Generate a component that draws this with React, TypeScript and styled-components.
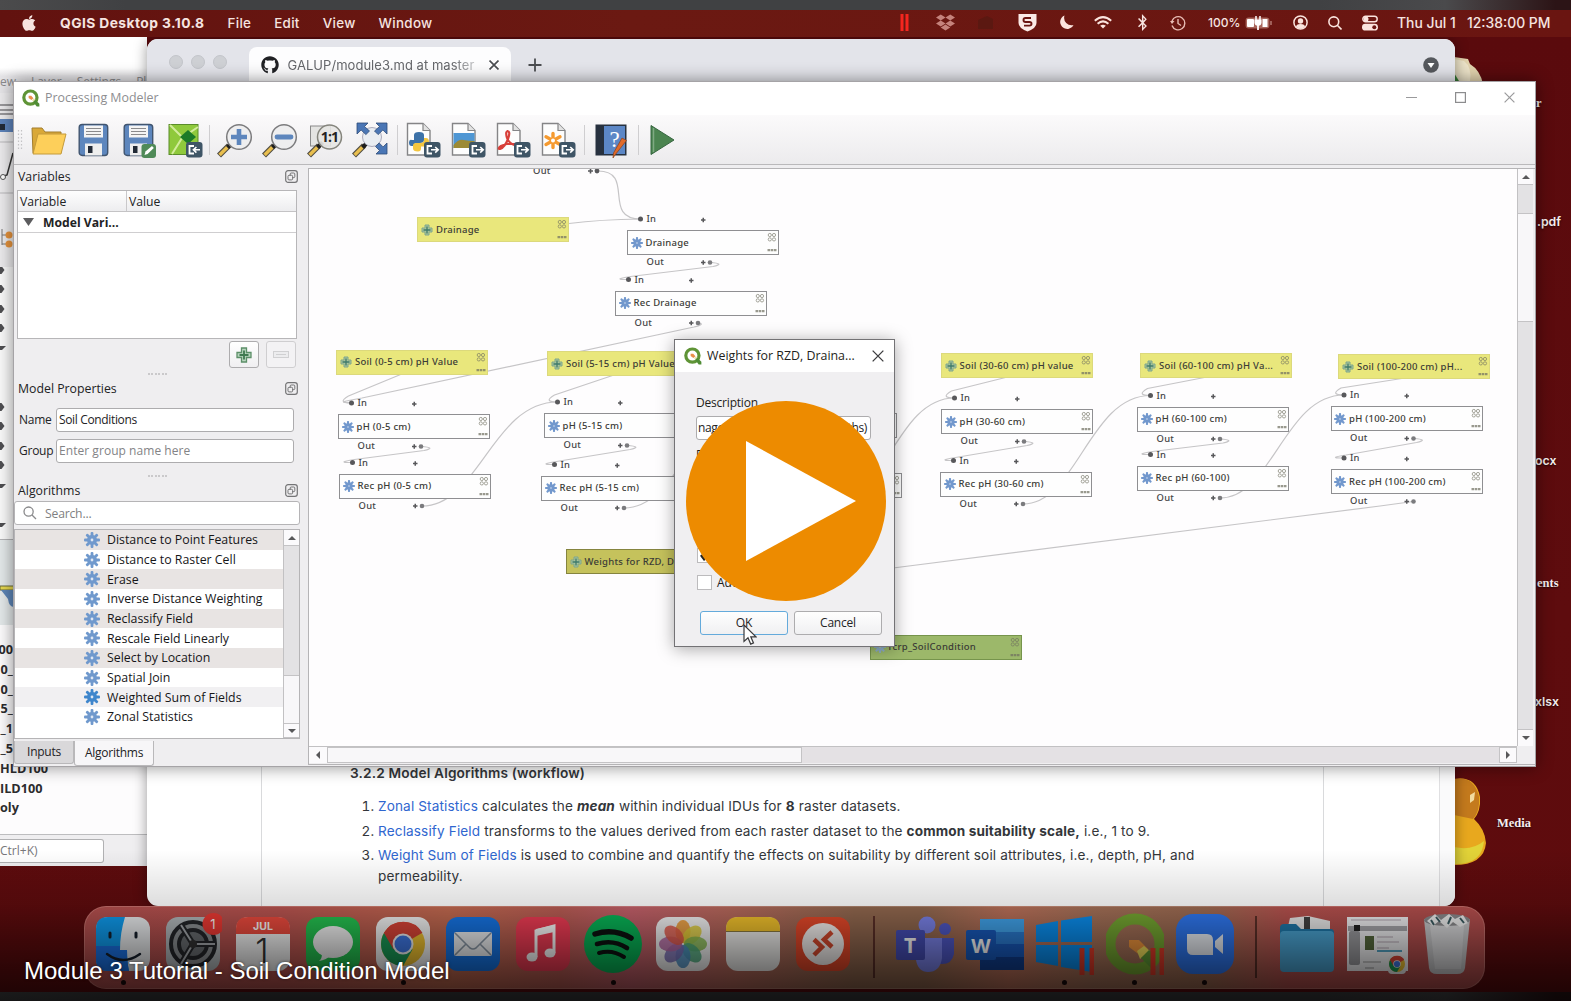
import React from 'react';
import styled, { createGlobalStyle, css } from 'styled-components';
import { FaApple, FaBluetoothB, FaDropbox, FaGithub } from 'react-icons/fa';

const ui = '"Open Sans", "Noto Sans", sans-serif';
const mac = 'Inter, Roboto, sans-serif';
const nodeFont = '"Noto Sans", "DejaVu Sans", sans-serif';

const Global = createGlobalStyle`
  * { box-sizing: border-box; }
  body { margin: 0; background: #404143; overflow: hidden; }
  svg { display: block; flex: none; }
`;

/* ---------- frame ---------- */

const Stage = styled.main`
  position: relative;
  display: flex;
  flex-direction: column;
  width: 1571px;
  height: 1001px;
  overflow: hidden;
  font-family: ${ui};
`;
const Strip = styled.div<{ $h: number }>`
  flex: none;
  height: ${p => p.$h}px;
  background: linear-gradient(90deg, #4b4b4c 0, #404143 8%, #404143 84%, #4a4a4c 92%, #2c1416 99%);
`;
const Desktop = styled.div`
  position: relative;
  flex: 1;
  overflow: hidden;
  background: linear-gradient(180deg, #5a0a0d 0, #5e0c0e 60%, #5e0b0d 100%);
`;

/* ---------- menu bar ---------- */

const MenuBar = styled.header`
  flex: none;
  display: flex;
  align-items: center;
  height: 27px;
  padding: 0 19px 2px 20px;
  background: linear-gradient(90deg, #62120f, #6b1912 40%, #6a1511);
  color: #f6e4e0;
  font: 500 13.4px/24px ${mac};
`;
const Menus = styled.nav`
  display: flex;
  flex: 1;
  padding-left: 22px;
  gap: 23px;
  letter-spacing: 0.3px;
`;
const AppName = styled.strong`
  font-weight: 700;
  font-size: 13.8px;
  letter-spacing: 0.42px;
`;
const Status = styled.div`
  display: flex;
  align-items: center;
`;
const Slot = styled.span<{ $w: number; $gap?: number; $size?: number }>`
  display: flex;
  flex: none;
  width: ${p => p.$w}px;
  margin-left: ${p => p.$gap ?? 0}px;
  font-size: ${p => p.$size ?? 13.9}px;
  white-space: nowrap;
`;

/* ---------- windows ---------- */

const Window = styled.section<{ $x: number; $y: number; $w: number; $h: number }>`
  position: absolute;
  left: ${p => p.$x}px;
  top: ${p => p.$y}px;
  width: ${p => p.$w}px;
  height: ${p => p.$h}px;
  display: flex;
  flex-direction: column;
  overflow: hidden;
`;
const BackWindow = styled(Window)`
  background: #fdfcfd;
  font-size: 12px;
  color: #2c2c2e;
`;
const BackMenu = styled.div`
  display: flex;
  gap: 15px;
  height: 56px;
  flex: none;
  padding: 36px 0 0;
  font-size: 12px;
  line-height: 18px;
  color: #8b8b8d;
  background: linear-gradient(180deg, #fff 0, #fff 55%, #e6e5e8 70%);
`;
const BackStrip = styled.div`
  flex: 1;
  width: 14px;
  display: flex;
  flex-direction: column;
`;
const BackTools = styled.div`
  height: 174px;
  flex: none;
  background: #ecebed;
`;
const BackTree = styled.div`
  height: 272px;
  flex: none;
  background: #fafafa;
`;
const BackFilter = styled.div`
  height: 86px;
  flex: none;
  padding-top: 43px;
  background: #e4e9ea;
  border-top: 1px solid #b4b4b6;
`;
const BackLayers = styled.div`
  flex: none;
  width: 146px;
  height: 209px;
  padding-top: 14px;
`;
const LayerLine = styled.div<{ $wide?: boolean }>`
  width: ${p => (p.$wide ? 130 : 13)}px;
  height: 19.8px;
  display: flex;
  justify-content: ${p => (p.$wide ? 'flex-start' : 'flex-end')};
  overflow: hidden;
  font-weight: 700;
  font-size: 12.7px;
  line-height: 20px;
  white-space: nowrap;
`;
const BackFooter = styled.div`
  flex: none;
  height: 32px;
  padding-top: 4px;
  background: #efeef0;
  border-top: 1px solid #bdbdbf;
`;
const BackInput = styled.div`
  width: 104px;
  height: 24px;
  border: 1px solid #b1b1b3;
  border-left: 0;
  border-radius: 0 3px 3px 0;
  background: #fff;
  color: #77777a;
  line-height: 22px;
  font-size: 12px;
`;

const Browser = styled(Window)`
  border-radius: 11px;
  background: #fff;
  box-shadow: 0 0 14px rgba(0, 0, 0, 0.4);
  font-family: ${mac};
`;
const TabStrip = styled.div`
  flex: none;
  display: flex;
  align-items: flex-end;
  height: 46px;
  padding-left: 22px;
  background: #e3e4ea;
`;
const Lights = styled.div`
  display: flex;
  gap: 8px;
  width: 79.5px;
  padding-bottom: 16px;
  i {
    width: 14px;
    height: 14px;
    border-radius: 50%;
    background: #ced0d4;
    border: 1px solid #c3c5ca;
  }
`;
const Tab = styled.div`
  display: flex;
  align-items: center;
  width: 262px;
  height: 38px;
  padding: 0 13px 3px 12px;
  border-radius: 8px 8px 0 0;
  background: #fdfdfe;
  color: #66686c;
  font-size: 13px;
`;
const TabTitle = styled.span`
  flex: none;
  width: 187px;
  margin: 0 14px 0 9px;
  overflow: hidden;
  white-space: nowrap;
  letter-spacing: 0.04px;
  -webkit-mask-image: linear-gradient(90deg, #000 88%, rgba(0, 0, 0, 0.35));
`;
const TabTail = styled.div`
  flex: 1;
  display: flex;
  align-items: center;
  justify-content: space-between;
  height: 38px;
  padding: 0 16px 3px 17px;
`;
const Page = styled.div`
  flex: 1;
  display: flex;
  padding-left: 114px;
  padding-top: 669px;
`;
const Article = styled.article`
  width: 1063px;
  padding: 9px 90px 0 88px;
  border-left: 1px solid #d9dadc;
  border-right: 1px solid #d9dadc;
  color: #33363a;
  font-size: 13.6px;
  letter-spacing: 0.13px;
  line-height: 20px;
  white-space: nowrap;
`;
const ArticleHead = styled.h4`
  margin: 0 0 13px;
  font-size: 13.7px;
  letter-spacing: 0.15px;
  line-height: 20px;
  font-weight: 600;
`;
const Steps = styled.ol`
  margin: 0;
  padding-left: 28px;
  li { margin-bottom: 4.6px; padding-left: 0; }
  li:last-child { line-height: 21px; }
`;
const Link = styled.a`
  color: #2f66cf;
`;
const PageScroll = styled.div`
  margin-left: auto;
  width: 16px;
  border-left: 1px solid #e0e0e2;
  background: #fafafb;
`;

const Modeler = styled(Window)`
  background: #efeef0;
  border: 1px solid #a5a3a6;
  box-shadow: 0 0 16px rgba(0, 0, 0, 0.45);
  color: #222224;
`;
const TitleBar = styled.div`
  flex: none;
  display: flex;
  align-items: center;
  height: 33px;
  padding: 0 20px 2px 8px;
  background: #fff;
  color: #8e8e91;
  font-size: 12.4px;
`;
const TitleText = styled.span`
  flex: 1;
  margin-left: 5px;
`;
const Controls = styled.div`
  display: flex;
  gap: 38px;
`;
const Toolbar = styled.div`
  flex: none;
  display: flex;
  align-items: center;
  height: 50px;
  padding-left: 3px;
  background: linear-gradient(180deg, #fbfafb, #ecebed);
  border-bottom: 1px solid #bab9bb;
`;
const Tool = styled.span<{ $gap?: number }>`
  display: flex;
  width: 36px;
  margin-right: 9px;
  margin-left: ${p => p.$gap ?? 0}px;
`;
const Rule = styled.i<{ $before: number; $after: number }>`
  width: 1px;
  height: 30px;
  margin: 0 ${p => p.$after}px 0 ${p => p.$before}px;
  background: #cfced0;
`;
const Body = styled.div`
  flex: 1;
  display: flex;
  min-height: 0;
`;

/* ---------- side panels ---------- */

const Side = styled.aside`
  flex: none;
  width: 294px;
  display: flex;
  flex-direction: column;
  font-size: 12.2px;
`;
const PanelHead = styled.div<{ $top: number }>`
  flex: none;
  display: flex;
  align-items: center;
  justify-content: space-between;
  height: 18px;
  margin-top: ${p => p.$top}px;
  padding: 0 10px 0 4px;
  font-size: 12.3px;
`;
const VarTable = styled.div`
  flex: none;
  width: 280px;
  height: 149px;
  margin: 5px 0 0 3px;
  border: 1px solid #b7b6b8;
  background: #fff;
`;
const VarHead = styled.div`
  display: flex;
  height: 21px;
  line-height: 22px;
  background: linear-gradient(180deg, #fefefe, #ededef);
  border-bottom: 1px solid #c4c3c5;
  span { padding-left: 2px; }
  span:first-child { width: 109px; border-right: 1px solid #c9c8ca; }
`;
const VarRow = styled.div`
  display: flex;
  align-items: center;
  gap: 9px;
  height: 21px;
  padding-left: 5px;
  font-weight: 700;
  border-bottom: 1px solid #cfced0;
`;
const VarButtons = styled.div`
  display: flex;
  gap: 7px;
  margin: 2px 0 0 215px;
`;
const IconButton = styled.div<{ $off?: boolean }>`
  display: flex;
  align-items: center;
  justify-content: center;
  width: 30px;
  height: 27px;
  border: 1px solid ${p => (p.$off ? '#cfced0' : '#adacae')};
  border-radius: 3px;
  background: ${p => (p.$off ? '#f3f2f4' : 'linear-gradient(180deg,#fff,#f0eff1)')};
`;
const Grip = styled.div<{ $top: number }>`
  flex: none;
  width: 19px;
  height: 2px;
  margin: ${p => p.$top}px 0 0 134px;
  background: repeating-linear-gradient(90deg, #cac9cb 0 2px, transparent 2px 3.4px);
`;
const Field = styled.label<{ $top: number }>`
  flex: none;
  display: flex;
  align-items: center;
  height: 25px;
  margin-top: ${p => p.$top}px;
  padding-left: 5px;
  font-size: 12px;
  letter-spacing: -0.25px;
`;
const FieldName = styled.span`
  width: 37px;
`;
const Input = styled.span<{ $hint?: boolean; $w: number }>`
  width: ${p => p.$w}px;
  height: 24px;
  padding-left: 2px;
  border: 1px solid #adacae;
  border-radius: 3px;
  background: #fff;
  line-height: 22px;
  white-space: nowrap;
  overflow: hidden;
  color: ${p => (p.$hint ? '#838386' : '#222224')};
  letter-spacing: ${p => (p.$hint ? 0.05 : -0.35)}px;
`;
const Search = styled.div`
  flex: none;
  display: flex;
  align-items: center;
  gap: 8px;
  width: 286px;
  height: 24px;
  margin-top: 2px;
  padding-left: 8px;
  border: 1px solid #b5b4b6;
  border-radius: 3px;
  background: #fff;
  color: #7f7f82;
  letter-spacing: -0.2px;
`;
const AlgoBox = styled.div`
  flex: none;
  display: flex;
  width: 286px;
  height: 210px;
  margin-top: 4px;
  border: 1px solid #b5b4b6;
  background: #fff;
`;
const AlgoList = styled.div`
  flex: 1;
`;
const Algo = styled.div<{ $bg: string }>`
  display: flex;
  align-items: center;
  gap: 7px;
  height: 19.68px;
  padding-left: 69px;
  background: ${p => p.$bg};
  font-size: 12.35px;
  color: #161618;
  white-space: nowrap;
`;
const VScroll = styled.div`
  flex: none;
  width: 16px;
  display: flex;
  flex-direction: column;
  border-left: 1px solid #c2c1c3;
`;
const HScroll = styled.div`
  display: flex;
  border-top: 1px solid #c2c1c3;
`;
const Piece = styled.div<{ $h?: number; $w?: number; $bg: string; $line?: boolean }>`
  display: flex;
  align-items: center;
  justify-content: center;
  flex: ${p => (p.$h || p.$w ? 'none' : 1)};
  ${p => p.$h && css`height: ${p.$h}px;`}
  ${p => p.$w && css`width: ${p.$w}px;`}
  background: ${p => p.$bg};
  border: ${p => (p.$line ? '1px solid #c4c3c5' : '0 solid')};
  border-left-width: ${p => (p.$w && p.$line ? 1 : 0)}px;
  border-right-width: ${p => (p.$w && p.$line ? 1 : 0)}px;
`;
const Tabs = styled.div`
  display: flex;
  align-items: flex-start;
  margin-top: 2px;
`;
const SideTab = styled.div<{ $w: number; $on?: boolean }>`
  width: ${p => p.$w}px;
  height: ${p => (p.$on ? 25 : 23)}px;
  line-height: ${p => (p.$on ? 24 : 22)}px;
  text-align: center;
  font-size: 12px;
  letter-spacing: -0.25px;
  border: 1px solid #b9b8ba;
  border-top: 0;
  border-radius: 0 0 3px 3px;
  background: ${p => (p.$on ? '#f7f6f8' : '#d9d8da')};
`;

/* ---------- model canvas ---------- */

const CanvasFrame = styled.div`
  flex: 1;
  display: grid;
  grid-template: 577px 17px / 1208px 17px;
  margin: 3px 0 0;
  border: 1px solid #b5b4b6;
  border-right: 0;
  height: 597px;
`;
const Canvas = styled.div`
  position: relative;
  overflow: hidden;
  background: #fefdfe;
`;
/* The scene keeps screen coordinates so that nodes and wires share one origin. */
const Scene = styled.div`
  position: absolute;
  left: -309px;
  top: -169px;
  width: 1571px;
  height: 1001px;
`;
const Wires = styled.svg`
  position: absolute;
  inset: 0;
`;
const tones = {
  step: { bg: '#fefefe', line: '#8f8f92' },
  input: { bg: '#e9e77c', line: '#dcd97c' },
  active: { bg: '#c5c25c', line: '#85843f' },
  output: { bg: '#9cb86a', line: '#76944c' },
};
type Tone = keyof typeof tones;
const NodeBox = styled.div<{ $x: number; $y: number; $tone: Tone }>`
  position: absolute;
  left: ${p => p.$x}px;
  top: ${p => p.$y}px;
  width: 152px;
  height: 25px;
  display: flex;
  align-items: center;
  padding: 0 1px 0 ${p => (p.$tone === 'step' ? 2.5 : 3)}px;
  border: 1.5px solid ${p => tones[p.$tone].line};
  background: ${p => tones[p.$tone].bg};
  color: #3b3b36;
  font: 500 9.5px/22px ${nodeFont};
  letter-spacing: 0.26px;
`;
const NodeLabel = styled.span`
  flex: 1;
  margin-left: 3px;
  white-space: nowrap;
`;
const Port = styled.span<{ $x: number; $y: number }>`
  position: absolute;
  left: ${p => p.$x}px;
  top: ${p => p.$y - 6.5}px;
  color: #444446;
  font: 500 9.4px/14px ${nodeFont};
  letter-spacing: 0.3px;
`;

/* ---------- dialog ---------- */

const Dialog = styled(Window)`
  background: #f0eff1;
  border: 1.5px solid #737275;
  box-shadow: 0 2px 16px rgba(0, 0, 0, 0.35);
  color: #1e1e20;
  font-size: 12px;
`;
const DialogTitle = styled.div`
  flex: none;
  display: flex;
  align-items: center;
  height: 32px;
  padding: 0 10px 1px 9px;
  background: #fff;
  font-size: 12.4px;
`;
const DialogBody = styled.div`
  flex: 1;
  display: flex;
  flex-direction: column;
  padding: 20px 0 0 21px;
  letter-spacing: -0.2px;
`;
const Line = styled.div<{ $h: number }>`
  flex: none;
  display: flex;
  align-items: center;
  gap: 5px;
  height: ${p => p.$h}px;
`;
const Between = styled.span`
  flex: 1;
`;
const DialogInput = styled(Input)`
  display: flex;
  padding-left: 1px;
  padding-right: 3px;
`;
const Check = styled.span`
  display: flex;
  align-items: center;
  justify-content: center;
  width: 15px;
  height: 15px;
  margin-left: 1px;
  border: 1px solid #bcbbbd;
  background: #fff;
`;
const Buttons = styled.div`
  display: flex;
  gap: 6px;
  margin: 16px 0 0 4px;
`;
const Button = styled.button<{ $main?: boolean }>`
  width: 88px;
  height: 24px;
  padding: 0;
  border: ${p => (p.$main ? '1.5px solid #64aadb' : '1px solid #adacae')};
  border-radius: 3px;
  background: linear-gradient(180deg, #fefefe, #f0f0f2);
  color: #242426;
  font: 12px/20px ${ui};
  letter-spacing: -0.2px;
`;
const Pointer = styled.svg`
  position: absolute;
  left: 743px;
  top: 624px;
`;

/* ---------- desktop labels ---------- */

const DeskLabel = styled.span<{ $x: number; $y: number; $serif?: boolean }>`
  position: absolute;
  left: ${p => p.$x}px;
  top: ${p => p.$y - 45}px;
  color: #f6eeee;
  font: ${p => (p.$serif ? '700 12.5px/16px "Liberation Serif", serif' : `600 12.3px/16px ${mac}`)};
  text-shadow: 0 1px 2px rgba(0, 0, 0, 0.7);
`;
const DeskArt = styled.svg`
  position: absolute;
  left: 1440px;
  top: 0;
`;

/* ---------- dock ---------- */

const Dock = styled.div`
  position: absolute;
  left: 84px;
  top: 869px;
  width: 1401px;
  height: 82.5px;
  display: flex;
  padding: 6px 3px 0;
  border-radius: 22px;
  border: 1px solid rgba(255, 210, 200, 0.25);
  background: linear-gradient(90deg, #b5504f 0, #b95450 14%, #c36a50 26%, #b95c54 34%, #c4606a 39%, #b8695c 46%, #92684f 55%,
    #92684f 60%, #bb7059 66%, #a57158 72%, #9d6b52 80%, #b8524f 86%, #b54f4e 100%);
`;
const DockSlot = styled.div`
  flex: none;
  display: flex;
  flex-direction: column;
  align-items: center;
  width: 70px;
`;
const DockDot = styled.i`
  width: 5px;
  height: 5px;
  margin-top: 5px;
  border-radius: 50%;
  background: #190a0a;
`;
const DockRule = styled.i`
  flex: none;
  width: 1.5px;
  height: 62px;
  margin: 3px 15.2px 0;
  background: #5c3028;
`;

/* ---------- player overlay ---------- */

const Shade = styled.div`
  position: absolute;
  left: 0;
  right: 0;
  bottom: 0;
  height: 151px;
  background: linear-gradient(180deg, transparent 0, rgba(0, 0, 0, 0.13) 36%, rgba(0, 0, 0, 0.52) 78%, rgba(0, 0, 0, 0.7) 100%);
`;
const Caption = styled.div`
  position: absolute;
  left: 24px;
  top: 957px;
  color: #fff;
  font: 24px/28px "Liberation Sans", Arial, sans-serif;
  text-shadow: 0 0 3px rgba(0, 0, 0, 0.6);
  white-space: nowrap;
`;
const Play = styled.button`
  position: absolute;
  left: 686px;
  top: 401px;
  width: 200px;
  height: 200px;
  padding: 0;
  border: 0;
  border-radius: 50%;
  background: #ed8b00;
`;

/* ---------- small drawings ---------- */

const QLogo = ({ size = 18 }: { size?: number }) => (
  <svg width={size} height={size} viewBox="0 0 18 18">
    <circle cx="8.4" cy="8.6" r="6.6" fill="#fff" stroke="#5f9436" strokeWidth="3.2" />
    <path d="M6.6 6.8l2.600-.1 2.200 2.500-2 1.900-2.800-2z" fill="#ea8f4a" />
    <path d="M10 11.200l1.900-1.900 1.600 1.500-1.700 2.200z" fill="#e8e2b0" />
    <path d="M11.200 13l2-2.200 4.200 3.900v2.700h-2.700z" fill="#4f8c35" />
  </svg>
);

const Gear = ({ size, color, hole = '#dfe7f3' }: { size: number; color: string; hole?: string }) => (
  <svg width={size} height={size} viewBox="0 0 16 16">
    {[0, 45, 90, 135].map(a => (
      <rect key={a} x="6.600" y="0" width="2.800" height="16" rx="1" fill={color} transform={`rotate(${a} 8 8)`} />
    ))}
    <circle cx="8" cy="8" r="4.900" fill={color} />
    <circle cx="8" cy="8" r="1.400" fill={hole} />
  </svg>
);

const PlusMark = () => (
  <svg width="12" height="12" viewBox="0 0 12 12">
    <path d="M4 1h4v3h3v4H8v3H4V8H1V4h3z" fill="#a9c49a" stroke="#7fa68c" />
    <path d="M6 2.500v7M2.500 6h7" stroke="#3f7a6c" strokeWidth="1.300" />
  </svg>
);

const NodeMarks = () => (
  <svg width="10" height="21" viewBox="0 0 10 21" fill="none" stroke="#6f6f60" opacity=".7">
    <g strokeWidth=".9">
      <circle cx="2.800" cy="3" r="1.600" /><circle cx="7" cy="3" r="1.600" />
      <circle cx="2.800" cy="7.400" r="1.600" /><circle cx="7" cy="7.400" r="1.600" />
    </g>
    <path d="M.5 18.200h9" strokeWidth="2.200" strokeDasharray="2.600 .6" />
  </svg>
);

const DockMark = () => (
  <svg width="13" height="13" viewBox="0 0 13 13" fill="none" stroke="#747476">
    <rect x=".7" y=".7" width="11.6" height="11.6" rx="2.4" strokeWidth="1.2" />
    <rect x="5.2" y="3" width="4.6" height="4.6" rx="1" />
    <rect x="3" y="5.3" width="4.6" height="4.6" rx="1" fill="#efeef0" />
  </svg>
);

const Arrow = ({ dir }: { dir: 'up' | 'down' | 'left' | 'right' }) => {
  const d = { up: 'M0 6l4-4 4 4z', down: 'M0 2l4 4 4-4z', left: 'M6 0L2 4l4 4z', right: 'M2 0l4 4-4 4z' }[dir];
  return <svg width="8" height="8" viewBox="0 0 8 8"><path d={d} fill="#58585a" /></svg>;
};

const Cross = ({ size, color, width = 1.2 }: { size: number; color: string; width?: number }) => (
  <svg width={size} height={size} viewBox="0 0 11 11"><path d="M.6.6l9.8 9.8M10.4.6L.6 10.4" stroke={color} strokeWidth={width} /></svg>
);

/* ---------- toolbar drawings, 36 x 36 ---------- */

const Icon = ({ children }: { children: React.ReactNode }) => (
  <svg width="36" height="36" viewBox="0 0 36 36">{children}</svg>
);
const ExportBadge = ({ flip }: { flip?: boolean }) => (
  <g>
    <rect x="18" y="20" width="16.5" height="15.5" rx="3" fill="#3f5566" />
    <path d="M26 24h-4.5v7.5H26" fill="none" stroke="#fff" strokeWidth="1.8" />
    <path d={flip ? 'M32 27.8h-6M28.4 25l-3 2.8 3 2.8' : 'M25 27.8h7M29.2 25l3 2.8-3 2.8'} fill="none" stroke="#fff" strokeWidth="1.6" />
  </g>
);
const Sheet = ({ children }: { children: React.ReactNode }) => (
  <Icon>
    <path d="M1.5 1.5H17l7 7V33H1.5z" fill="#fdfdfd" stroke="#858587" strokeWidth="1.4" />
    <path d="M17 1.5v7h7" fill="#e2e2e2" stroke="#858587" strokeWidth="1.2" />
    {children}
    <ExportBadge />
  </Icon>
);
const Floppy = ({ edit }: { edit?: boolean }) => (
  <Icon>
    <rect x="1.2" y="2.5" width="28.5" height="31" rx="3" fill="#5d86bd" stroke="#41556f" strokeWidth="1.4" />
    <path d="M6 3.5h19v12H6z" fill="#f4f4f4" />
    <path d="M8 6.5h15M8 9.5h15M8 12.5h15" stroke="#8a8a8c" strokeWidth="1.2" />
    <path d="M7 21.5h17v12H7z" fill="#eee" />
    <path d="M10 24h4.5v7H10z" fill="#222a36" />
    {edit && (
      <g>
        <rect x="18.5" y="22" width="14.5" height="14" rx="3" fill="#4f8a58" />
        <path d="M21.5 33l1-3.5 6.5-5.5 1.8 2-6.2 6z" fill="#fff" />
      </g>
    )}
  </Icon>
);
const Handle = () => (
  <g>
    <path d="M2 33.5l10-10" stroke="#4e4a40" strokeWidth="5.600" />
    <path d="M2.600 33l8-8" stroke="#e8be4e" strokeWidth="3.400" />
    <path d="M10.500 25.500l5-5" stroke="#1e1e1e" strokeWidth="4" />
  </g>
);
const Lens = ({ children }: { children: React.ReactNode }) => (
  <Icon>
    <Handle />
    <circle cx="22" cy="15" r="12.3" fill="#eeeeef" stroke="#7c7c7e" strokeWidth="1.5" />
    {children}
  </Icon>
);

const tools: { gap?: number; rule?: [number, number]; art: React.ReactNode }[] = [
  { art: <Icon><path d="M1 6h10l3 4h16v21H2z" fill="#d9a838" stroke="#a27d2d" /><path d="M7 12h28l-5 20H2z" fill="#fdcf5a" stroke="#c49a3a" /></Icon> },
  { gap: 1.5, art: <Floppy /> },
  { art: <Floppy edit /> },
  {
    rule: [-4, 7.5],
    art: (
      <Icon>
        <rect x="1" y="2.5" width="29" height="30" fill="#8fc93c" stroke="#5a8c2b" />
        <path d="M2 3l12 12M30 5L14 16 4 32" stroke="#d3ec9c" strokeWidth="2" fill="none" />
        <path d="M20 8l8 7-8 7-8-7z" fill="#1b7a28" />
        <ExportBadge flip />
      </Icon>
    ),
  },
  { art: <Lens><path d="M22 7v16M14 15h16" stroke="#5d86bd" strokeWidth="4.600" /></Lens> },
  { art: <Lens><path d="M15 15h14" stroke="#5d86bd" strokeWidth="4.800" strokeLinecap="round" /></Lens> },
  {
    art: (
      <Icon>
        <rect x="3.5" y="4" width="20" height="20" fill="#e4e4e2" stroke="#8a8a8a" />
        <Handle />
        <circle cx="22.5" cy="15" r="12" fill="#e6e6e3" fillOpacity=".9" stroke="#85857d" strokeWidth="1.500" />
        <text x="22.5" y="20" textAnchor="middle" fontFamily="Open Sans" fontWeight="700" fontSize="14" letterSpacing="-.8" fill="#222">1:1</text>
      </Icon>
    ),
  },
  {
    rule: [0, 8],
    art: (
      <Icon>
        <Handle />
        <circle cx="20" cy="15" r="9.5" fill="#e9edf2" stroke="#aab" />
        <g fill="#4a76b5" stroke="#2f4c78" strokeWidth=".8">
          <path d="M5 1h11l-3.5 3.5 5 4.5-3.6 3.6-4.8-4.6L5 12z" />
          <path d="M35 1H24l3.5 3.5-5 4.5 3.6 3.6 4.8-4.6L35 12z" />
          <path d="M35 32H24l3.5-3.5-4-4 3.6-3.6 4 4L35 21z" />
        </g>
      </Icon>
    ),
  },
  {
    art: (
      <Sheet>
        <path d="M8 18v-5q0-3 5-3t5 3v5q0 3-4 3h-3q-3 0-3 3H5.5q-2.5 0-2.5-3.5T6 18z" fill="#3d72a8" />
        <path d="M18 16h2q3 0 3 4t-3 4.5h-5v2q0 3-3 3-5 0-5-3v-3q0-2.500 3-2.500h4q4 0 4-3z" fill="#f4c63f" />
      </Sheet>
    ),
  },
  { art: <Sheet><rect x="2.5" y="11" width="21" height="15" fill="#4f97d4" /><path d="M2.5 23q5-6 10-5t11 1v7h-21z" fill="#9c8a35" /></Sheet> },
  { art: <Sheet><path d="M12 9q-3 0-1 7 2 6 10 8M11 9q4 0 1 8-3 8-8 10-3 0 1-3 5-3 15-2" fill="none" stroke="#d8403a" strokeWidth="2.2" /></Sheet> },
  {
    rule: [-2, 10],
    art: (
      <Sheet>
        <g stroke="#f59a30" strokeWidth="3.4" strokeLinecap="round">
          <path d="M12 11.5v14M5 14.8l14 7.6M19 14.8L5 22.4" />
        </g>
        <circle cx="12" cy="18.5" r="2" fill="#fff" />
      </Sheet>
    ),
  },
  {
    rule: [-2, 10],
    art: (
      <Icon>
        <rect x=".5" y="2.5" width="31" height="31" fill="#27313f" />
        <rect x="9" y="4" width="21" height="28" fill="#5c87c6" />
        <text x="19.5" y="25" textAnchor="middle" fontFamily="Liberation Serif" fontSize="23" fill="#fff">?</text>
        <path d="M20 33l-2 3 .5-5L27 16l4.500 2.500z" fill="#e06a2a" stroke="#8a3f1a" strokeWidth=".7" />
      </Icon>
    ),
  },
  { art: <Icon><path d="M2 3.5l23 14.500L2 32.500z" fill="#4b8450" stroke="#376640" /><path d="M4.500 6v24" stroke="#7fa982" strokeWidth="1.500" /></Icon> },
];

/* ---------- model data ---------- */

type Step = { x: number; y: number; text: string };
const inputs: Step[] = [
  { x: 417, y: 217, text: 'Drainage' },
  { x: 336, y: 349.5, text: 'Soil (0-5 cm) pH Value' },
  { x: 547, y: 351, text: 'Soil (5-15 cm) pH Value' },
  { x: 940.5, y: 353, text: 'Soil (30-60 cm) pH value' },
  { x: 1140, y: 353, text: 'Soil (60-100 cm) pH Va...' },
  { x: 1338, y: 354, text: 'Soil (100-200 cm) pH...' },
];
const steps: Step[] = [
  { x: 627, y: 230, text: 'Drainage' },
  { x: 615, y: 290.5, text: 'Rec Drainage' },
  { x: 338, y: 414, text: 'pH (0-5 cm)' },
  { x: 339, y: 473.5, text: 'Rec pH (0-5 cm)' },
  { x: 544, y: 413, text: 'pH (5-15 cm)' },
  { x: 541, y: 475.5, text: 'Rec pH (5-15 cm)' },
  { x: 745, y: 413, text: 'pH (15-30 cm)' },
  { x: 749.5, y: 472.5, text: 'Rec pH (15-30 cm)' },
  { x: 941, y: 409, text: 'pH (30-60 cm)' },
  { x: 940, y: 471.5, text: 'Rec pH (30-60 cm)' },
  { x: 1137, y: 406.5, text: 'pH (60-100 cm)' },
  { x: 1137, y: 465.5, text: 'Rec pH (60-100)' },
  { x: 1330.5, y: 406, text: 'pH (100-200 cm)' },
  { x: 1330.5, y: 469, text: 'Rec pH (100-200 cm)' },
];
const inAt = (s: Step) => ({ x: s.x + 13.5, y: s.y - 11 });
const outAt = (s: Step) => ({ x: s.x + 83, y: s.y + 32.5 });

/* Short wire that loops from an output back to the input below it. */
const loop = (a: Step, b: Step) => {
  const o = outAt(a);
  const i = inAt(b);
  return `M${o.x} ${o.y}q16 1 3 4L${i.x + 2} ${i.y - 3}Q${i.x - 18} ${i.y} ${i.x} ${i.y}`;
};
/* Long S-shaped wire to the next column. */
const sweep = (a: Step, b: Step) => {
  const o = outAt(a);
  const i = inAt(b);
  const w = i.x - o.x;
  return `M${o.x} ${o.y}C${o.x + w * 0.42} ${o.y} ${o.x + w * 0.52} ${i.y} ${i.x} ${i.y}`;
};
const drop = (a: Step, b: Step) => {
  const i = inAt(b);
  return `M${a.x + 67} ${a.y + 24}L${i.x - 3} ${i.y - 7}Q${i.x - 15} ${i.y} ${i.x} ${i.y}`;
};
const wires = [
  'M598 171C636 171 601 219 641 219',
  'M569 223.5Q600 219.5 641 219',
  'M698 323q8 1-4 4L362 398Q332 403 351 402.5',
  ...[0, 2, 4, 8, 10, 12].map(k => loop(steps[k], steps[k + 1])),
  ...[3, 5, 7, 9, 11].map(k => sweep(steps[k], steps[k + 1])),
  drop(inputs[1], steps[2]), drop(inputs[2], steps[4]), drop(inputs[3], steps[8]),
  drop(inputs[4], steps[10]), drop(inputs[5], steps[12]),
  'M1413 501.5L1380 506 893 568',
];

const Diagram = () => (
  <Scene>
    <Wires width="1571" height="1001">
      <g fill="none" stroke="#c6c5c7" strokeWidth="1.2">
        {wires.map(d => <path key={d} d={d} />)}
      </g>
      <g fill="#58585b">
        <circle cx="597" cy="171" r="2.400" />
        <path d="M588 171h5M590.500 168.500v5" stroke="#58585b" strokeWidth="1.600" />
        {steps.map(s => {
          const i = inAt(s);
          const o = outAt(s);
          return (
            <g key={s.text + s.x}>
              <circle cx={i.x} cy={i.y} r="2.500" />
              <circle cx={o.x} cy={o.y} r="2.300" fill="#7b7b7e" />
              <path d={`M${s.x + 74} ${i.y + 1}h4.5m-2.25-2.25v4.5M${s.x + 74} ${o.y}h4.5m-2.25-2.25v4.5`} stroke="#58585b" strokeWidth="1.500" />
            </g>
          );
        })}
      </g>
    </Wires>
    <Port $x={533} $y={170}>Out</Port>
    {steps.map(s => (
      <React.Fragment key={s.text + s.y}>
        <Port $x={s.x + 19.5} $y={s.y - 11.5}>In</Port>
        <Port $x={s.x + 19.5} $y={s.y + 31.5}>Out</Port>
        <NodeBox $x={s.x} $y={s.y} $tone="step">
          <Gear size={12} color="#7298cd" hole="#a8c0e2" /><NodeLabel>{s.text}</NodeLabel><NodeMarks />
        </NodeBox>
      </React.Fragment>
    ))}
    {inputs.map(s => (
      <NodeBox key={s.text} $x={s.x} $y={s.y} $tone="input"><PlusMark /><NodeLabel>{s.text}</NodeLabel><NodeMarks /></NodeBox>
    ))}
    <NodeBox $x={565.5} $y={549} $tone="active"><PlusMark /><NodeLabel>Weights for RZD, D</NodeLabel></NodeBox>
    <NodeBox $x={869.5} $y={634.5} $tone="output">
      <Gear size={12} color="#8faecb" hole="#b5cba0" /><NodeLabel>rcrp_SoilCondition</NodeLabel><NodeMarks />
    </NodeBox>
  </Scene>
);

const algos = [
  'Distance to Point Features', 'Distance to Raster Cell', 'Erase', 'Inverse Distance Weighting', 'Reclassify Field',
  'Rescale Field Linearly', 'Select by Location', 'Spatial Join', 'Weighted Sum of Fields', 'Zonal Statistics',
];

/* ---------- dock drawings ---------- */

const Tile = ({ bg, children, r = 12 }: { bg: string; children?: React.ReactNode; r?: number }) => (
  <svg width="58" height="62" viewBox="-2 -3 58 62">
    <rect width="54" height="54" y="1" rx={r} fill={bg} />
    {children}
  </svg>
);
const ChromeMark = ({ x, y, r }: { x: number; y: number; r: number }) => (
  <g transform={`translate(${x} ${y}) scale(${r / 22})`}>
    <circle r="22" fill="#f2c431" />
    <path d="M0 0L-19-11A22 22 0 0 1 19-11z" fill="#dc4437" />
    <path d="M0 0L-19-11A22 22 0 0 0 0 22L9.5 5.5z" fill="#1a9b57" />
    <path d="M0-11H19.5A22 22 0 0 0-19-11L-9.5 5.5z" fill="#dc4437" />
    <circle r="10.5" fill="#f4f4f4" />
    <circle r="8.5" fill="#3f78e6" />
  </g>
);
const petals = ['#f39a2b', '#e6d438', '#8cc152', '#4bab7d', '#4a90c8', '#7a6fb8', '#b767a5', '#ea5a4a'];

const dockIcons: { key: string; art: React.ReactNode; dot?: boolean; rule?: boolean }[] = [
  {
    key: 'finder', dot: true,
    art: (
      <Tile bg="#eceef0">
        <path d="M12 1H29Q24 17 24 34h7q0 12 2 21H12Q0 55 0 43V13Q0 1 12 1z" fill="#0f9df0" />
        <path d="M0 30h24v4h7q0 12 2 21H12Q0 55 0 43z" fill="#1c74e8" />
        <path d="M14 17v4M40 17v4" stroke="#16202c" strokeWidth="3" strokeLinecap="round" />
        <path d="M11 38q16 12 33 0" fill="none" stroke="#16202c" strokeWidth="2.4" strokeLinecap="round" />
      </Tile>
    ),
  },
  {
    key: 'settings',
    art: (
      <Tile bg="#b4babd">
        <circle cx="27" cy="28" r="22" fill="#8c9093" stroke="#24262a" strokeWidth="4" />
        <circle cx="27" cy="28" r="14" fill="#6a6e72" stroke="#24262a" strokeWidth="4" />
        <path d="M27 28L15 9M27 28h22M27 28L15 48" stroke="#24262a" strokeWidth="6" />
        <path d="M27 28L15 9M27 28h22M27 28L15 48" stroke="#a8acb0" strokeWidth="2" />
        <circle cx="27" cy="28" r="4" fill="#333" />
        <circle cx="47.5" cy="8" r="11" fill="#f03a34" />
        <text x="47" y="12.5" textAnchor="middle" fontFamily="Inter" fontSize="13" fill="#fff">1</text>
      </Tile>
    ),
  },
  {
    key: 'calendar',
    art: (
      <Tile bg="#f6f6f6">
        <path d="M12 1h30q12 0 12 12v5H0v-5Q0 1 12 1z" fill="#ef4b3e" />
        <text x="27" y="14" textAnchor="middle" fontFamily="Inter" fontWeight="700" fontSize="10.5" fill="#fff">JUL</text>
        <text x="26" y="47" textAnchor="middle" fontFamily="Inter" fontWeight="300" fontSize="34" fill="#333">1</text>
      </Tile>
    ),
  },
  { key: 'messages', art: <Tile bg="#25c451"><ellipse cx="27" cy="26" rx="20" ry="16" fill="#f5f5f5" /><path d="M16 38q0 5-3 7 7-1 11-5z" fill="#f5f5f5" /></Tile> },
  { key: 'chrome', dot: true, art: <Tile bg="#f6f6f6"><ChromeMark x={27} y={28} r={22} /></Tile> },
  {
    key: 'mail',
    art: (
      <Tile bg="#1676e8">
        <rect x="8" y="16" width="38" height="24" rx="2" fill="#f2f4f6" />
        <path d="M9 17l15 15q3 2 6 0l15-15M9 39l11-11M45 39L34 28" fill="none" stroke="#8b99a8" strokeWidth="1.6" />
      </Tile>
    ),
  },
  {
    key: 'music',
    art: (
      <Tile bg="#f23c55">
        <path d="M20 41V15l18-5v27" fill="none" stroke="#fff" strokeWidth="3" />
        <path d="M20 13l18-4v7l-18 4z" fill="#fff" />
        <ellipse cx="16" cy="41" rx="5.5" ry="4.5" fill="#fff" /><ellipse cx="34" cy="37" rx="5.5" ry="4.5" fill="#fff" />
      </Tile>
    ),
  },
  {
    key: 'spotify', dot: true,
    art: (
      <svg width="58" height="62" viewBox="0 0 58 62">
        <circle cx="29" cy="31" r="29" fill="#08b758" />
        <g fill="none" stroke="#0d1210" strokeLinecap="round">
          <path d="M11 21q19-6 36 4" strokeWidth="5.5" /><path d="M13 31q16-5 30 4" strokeWidth="4.6" /><path d="M15 40q13-4 25 4" strokeWidth="4" />
        </g>
      </svg>
    ),
  },
  {
    key: 'photos',
    art: (
      <Tile bg="#f8f8f8">
        {petals.map((c, i) => (
          <ellipse key={c} cx="27" cy="15.5" rx="7.500" ry="11.500" fill={c} fillOpacity=".85" transform={`rotate(${i * 45} 27 28)`} />
        ))}
      </Tile>
    ),
  },
  {
    key: 'notes',
    art: <Tile bg="#f2f1ef"><path d="M12 1h30q12 0 12 12v2H0v-2Q0 1 12 1z" fill="#f6c52c" /><path d="M0 15.5h54" stroke="#8c7a40" /></Tile>,
  },
  {
    key: 'remote', rule: true,
    art: (
      <Tile bg="#e8492a">
        <circle cx="27" cy="28" r="21" fill="#f8f4f2" />
        <path d="M18 23.500l8 7.500-8 8M36 16l-8 7.500 8 7.500" fill="none" stroke="#d84a2e" strokeWidth="4.500" />
      </Tile>
    ),
  },
  {
    key: 'teams',
    art: (
      <Tile bg="none">
        <circle cx="29" cy="9" r="8.5" fill="#7b83eb" /><circle cx="47" cy="13" r="6" fill="#5059c9" />
        <path d="M37 22h19v16q-2 10-12 10h-7z" fill="#5059c9" />
        <path d="M18 22h26v20q-2 14-14 14-10 0-12-12z" fill="#7b83eb" />
        <rect x="-2" y="14" width="29" height="30" rx="2" fill="#464eb8" />
        <text x="12" y="37" textAnchor="middle" fontFamily="Open Sans" fontWeight="700" fontSize="21" fill="#fff">T</text>
      </Tile>
    ),
  },
  {
    key: 'word',
    art: (
      <Tile bg="none">
        <rect x="12" y="3" width="44" height="14" fill="#41a5ee" /><rect x="12" y="16" width="44" height="13" fill="#2b7cd3" />
        <rect x="12" y="28" width="44" height="14" fill="#185abd" /><rect x="12" y="41" width="44" height="13" fill="#103f91" />
        <rect x="-2" y="14" width="30" height="30" rx="2" fill="#185abd" />
        <text x="13" y="36.5" textAnchor="middle" fontFamily="Open Sans" fontWeight="700" fontSize="20" fill="#fff">W</text>
      </Tile>
    ),
  },
  {
    key: 'windows', dot: true,
    art: (
      <Tile bg="none">
        <path d="M-2 9l22-4v21H-2zM23 4.5L54 0v26H23zM-2 29h22v21L-2 46zM23 29h31v27l-31-5z" fill="#0a8ff0" />
        <path d="M44 32v28M54 32v28" stroke="#e23a28" strokeWidth="5" />
      </Tile>
    ),
  },
  {
    key: 'qgis', dot: true,
    art: (
      <Tile bg="none">
        <circle cx="27" cy="28" r="25" fill="none" stroke="#76a832" strokeWidth="11" />
        <path d="M21 24h10l9 9-7 7-12-9z" fill="#f0953c" /><path d="M29 35l7-5 6 5-10 8z" fill="#f2e05a" />
        <path d="M33 42l8-8 6 5v17z" fill="#5f9a35" />
        <path d="M45 32v28M54 32v28" stroke="#e23a28" strokeWidth="5" />
      </Tile>
    ),
  },
  {
    key: 'zoom', dot: true, rule: true,
    art: (
      <svg width="58" height="62" viewBox="0 0 58 62">
        <rect y="1" width="58" height="60" rx="17" fill="#2f78f2" />
        <path d="M11 21h20q6 0 6 6v15H17q-6 0-6-6zM39 28l8-7v20l-8-7z" fill="#eef2f8" />
      </svg>
    ),
  },
  {
    key: 'folder',
    art: (
      <Tile bg="none">
        <path d="M10 2l18-2 22 5v14H6z" fill="#eee" /><path d="M24 1h6v12h-6z" fill="#444" />
        <path d="M0 12q0-4 4-4h12l5 5h30q3 0 3 4v34H0z" fill="#1f79ac" />
        <rect y="15" width="54" height="41" rx="4" fill="#4ba6d6" />
      </Tile>
    ),
  },
  {
    key: 'preview',
    art: (
      <svg width="64" height="62" viewBox="-2 -3 64 62">
        <rect width="61" height="54" y="1" fill="#f4f4f6" /><rect x="1" y="10" width="59" height="5" fill="#a9a9ad" />
        <rect x="2" y="15" width="11" height="34" rx="2" fill="#9d9da1" /><rect x="7" y="9" width="6" height="6" fill="#222" />
        <rect x="18" y="20" width="9" height="14" fill="#576b3e" />
        <path d="M4 4h50M30 21h16M30 26h22M30 32h12" stroke="#b6a9b4" /><path d="M30 35h25" stroke="#54a4c4" strokeWidth="2" />
        <path d="M16 46h18M18 52h9" stroke="#999" />
        <rect x="41" y="39" width="18" height="19" rx="4" fill="#f1f1f1" /><ChromeMark x={50} y={48} r={8} />
      </svg>
    ),
  },
  {
    key: 'trash',
    art: (
      <svg width="50" height="62" viewBox="0 0 50 62">
        <path d="M2 6h46l-5 49q-1 6-8 6H15q-7 0-8-6z" fill="#c9c9cb" /><path d="M8 12h34l-3 44H13z" fill="#d9d9db" />
        <ellipse cx="25" cy="7" rx="23" ry="6" fill="#8b8b8e" />
        <path d="M5 8l8-7 6 6 8-6 6 5 8-4 5 8-8 4-7-5-6 6-8-7-6 5z" fill="#f0f0f0" />
        <path d="M14 4l4 5M29 4l-3 7M38 5l4 5M9 7l3 5" stroke="#3b5c62" strokeWidth="2" />
      </svg>
    ),
  },
];

export default function App() {
  return (
    <Stage>
      <Global />
      <Strip $h={10} />
      <MenuBar>
        <FaApple size={18} />
        <Menus>
          <AppName>QGIS Desktop 3.10.8</AppName>
          <span>File</span><span>Edit</span><span>View</span><span>Window</span>
        </Menus>
        <Status>
          <Slot $w={9}><svg width="9" height="17"><path d="M2 0v17M7 0v17" stroke="#f5261f" strokeWidth="3" /></svg></Slot>
          <Slot $w={19} $gap={27}><FaDropbox size={19} color="#c5837c" /></Slot>
          <Slot $w={17} $gap={22}><svg width="17" height="16"><path d="M1 5l9-4 6 3v10H1z" fill="#5b1811" /></svg></Slot>
          <Slot $w={19} $gap={24}>
            <svg width="19" height="19" viewBox="0 0 19 19">
              <path d="M.5 1h18v9q0 5-9 8.500Q.5 15 .5 10z" fill="#fbeae6" />
              <path d="M13 5H7.500q-2 0-2 2t2 2h4q2 0 2 1.800t-2 1.800H6" fill="none" stroke="#6a1511" strokeWidth="1.900" />
            </svg>
          </Slot>
          <Slot $w={14} $gap={22}><svg width="15" height="15" viewBox="0 0 15 15"><path d="M5.500.5A7 7 0 1 0 14.500 10 7.500 7.500 0 0 1 5.500.5z" fill="#fbe4de" /></svg></Slot>
          <Slot $w={18} $gap={21}>
            <svg width="18" height="13" viewBox="0 0 18 13" fill="none" stroke="#fbe4de" strokeWidth="2">
              <path d="M.8 4.800q8.200-7.400 16.400 0M3.600 7.800q5.400-4.800 10.800 0" /><path d="M6.200 9.800q2.800-2.200 5.600 0L9 12.600z" fill="#fbe4de" stroke="none" />
            </svg>
          </Slot>
          <Slot $w={9} $gap={22}><FaBluetoothB size={17} /></Slot>
          <Slot $w={15} $gap={27}>
            <svg width="16" height="16" viewBox="0 0 16 16" fill="none" stroke="#e9bdb5" strokeWidth="1.4"><path d="M2 6A6.600 6.600 0 1 1 2 10.500M8 4v4.500l3 2" /><path d="M0 6h4.500L2 9z" fill="#e9bdb5" stroke="none" /></svg>
          </Slot>
          <Slot $w={31} $gap={23} $size={12}>100%</Slot>
          <Slot $w={27} $gap={6}>
            <svg width="28" height="14" viewBox="0 0 28 14">
              <rect x=".6" y="1.600" width="23.800" height="10.800" rx="3" fill="#a9665c" /><rect x="2" y="3" width="7" height="8" rx="1" fill="#fff" /><rect x="17.500" y="3" width="5" height="8" fill="#fff" />
              <path d="M11 0v4M15 0v4" stroke="#fff" strokeWidth="1.500" /><path d="M9.500 3.500h7v3q0 3-3.500 3.500-3.500-.5-3.500-3.500z" fill="#fff" /><path d="M13 9v5" stroke="#fff" strokeWidth="1.800" />
              <path d="M26 5v4" stroke="#b37870" strokeWidth="1.500" />
            </svg>
          </Slot>
          <Slot $w={14} $gap={21}>
            <svg width="15" height="15" viewBox="0 0 15 15"><circle cx="7.500" cy="7.500" r="6.600" fill="none" stroke="#fbe4de" strokeWidth="1.500" /><circle cx="7.500" cy="6" r="2.700" fill="#fbe4de" /><path d="M3 12q0-3 4.500-3t4.500 3q-4.500 3.500-9 0z" fill="#fbe4de" /></svg>
          </Slot>
          <Slot $w={14} $gap={21}><svg width="14" height="14" viewBox="0 0 14 14" fill="none" stroke="#fbe4de" strokeWidth="1.600"><circle cx="5.800" cy="5.800" r="4.900" /><path d="M9.300 9.300l4.200 4.200" /></svg></Slot>
          <Slot $w={16} $gap={20}>
            <svg width="16" height="16" viewBox="0 0 16 16"><rect x=".8" y="1.200" width="14.400" height="5.600" rx="2.800" fill="none" stroke="#fbe4de" strokeWidth="1.400" /><circle cx="4" cy="4" r="2.500" fill="#fbe4de" /><rect y="8.800" width="16" height="6.800" rx="3.400" fill="#fbe4de" /><circle cx="12.300" cy="12.200" r="2" fill="#6a1511" /></svg>
          </Slot>
          <Slot $w={59} $gap={19}>Thu Jul 1</Slot>
          <Slot $w={85} $gap={11}>12:38:00 PM</Slot>
        </Status>
      </MenuBar>

      <Desktop>
        <DeskArt width="131" height="860">
          <path d="M14 20l14 2 2 5q10 6 13 20H14z" fill="#e2d3ae" /><path d="M14 22l10 2q8 6 6 20H14z" fill="#f4ecd6" opacity=".7" /><path d="M14 36l5 8h-5z" fill="#3b8a3a" />
          <path d="M14 742q22-4 26 18 1 14-6 22 11 10 12 24-2 22-32 22z" fill="#e8a81e" />
          <path d="M14 742q20-4 25 18 1 14-6 22l-19-4z" fill="#c47a1d" /><path d="M14 810q18 4 30-6-2 24-30 23z" fill="#e2d338" />
          <path d="M30 758l5-3-1 8-4 3z" fill="#f3dca0" />
        </DeskArt>
        <DeskLabel $x={1537} $y={222}>.pdf</DeskLabel>
        <DeskLabel $x={1535} $y={461}>ocx</DeskLabel>
        <DeskLabel $x={1537} $y={583} $serif>ents</DeskLabel>
        <DeskLabel $x={1535} $y={702}>xlsx</DeskLabel>
        <DeskLabel $x={1497} $y={823} $serif>Media</DeskLabel>
        <DeskLabel $x={1536} $y={103} $serif>r</DeskLabel>

        <BackWindow $x={0} $y={0} $w={147} $h={829}>
          <BackMenu><span>ew</span><span>Layer</span><span>Settings</span><span>Pl</span></BackMenu>
          <BackStrip>
            <BackTools>
              <svg width="14" height="174" viewBox="0 0 14 174">
                <path d="M0 12h14M0 17h14M0 21h14" stroke="#7d7d80" strokeWidth="1.500" /><path d="M0 26h14v13H0z" fill="#5d83ba" /><path d="M0 31h5v6H0z" fill="#222a36" /><path d="M0 49h14M0 100h14" stroke="#b9b8bb" />
                <path d="M1 84l6-2 6-22" fill="none" stroke="#333" strokeWidth="1.500" /><circle cx="3" cy="84" r="2.500" fill="#fff" stroke="#555" />
                <path d="M2 136v16M2 142h6M2 151h6" stroke="#777" /><circle cx="9" cy="142" r="3.500" fill="#e8943c" /><circle cx="9" cy="151" r="3.500" fill="#e8943c" />
              </svg>
            </BackTools>
            <BackTree>
              <svg width="14" height="272" viewBox="0 0 14 272" fill="#4f4f52">
                {[3, 22, 42, 61, 140, 159, 179, 198].map(y => <path key={y} d={`M0 ${y - 4}h1.500l3 4-3 4H0z`} />)}
                {[81, 219, 258].map(y => <path key={y} d={`M0 ${y - 2}h6l-4 4H0z`} />)}
              </svg>
            </BackTree>
            <BackFilter><svg width="14" height="26"><path d="M0 3h14v4H0z" fill="#e6d850" stroke="#6b6a3a" /><path d="M1 7h13v17q-5 0-6-8z" fill="#5d86b8" /></svg></BackFilter>
          </BackStrip>
          <BackLayers>
            <LayerLine>00</LayerLine><LayerLine>0_</LayerLine><LayerLine>0_</LayerLine><LayerLine>5_</LayerLine><LayerLine>_1</LayerLine><LayerLine>_5</LayerLine>
            <LayerLine $wide>HLD100</LayerLine><LayerLine $wide>ILD100</LayerLine><LayerLine $wide>oly</LayerLine>
          </BackLayers>
          <BackFooter><BackInput>Ctrl+K)</BackInput></BackFooter>
        </BackWindow>

        <Browser $x={147} $y={2} $w={1308} $h={867}>
          <TabStrip>
            <Lights><i /><i /><i /></Lights>
            <Tab>
              <FaGithub size={18} color="#202124" />
              <TabTitle>GALUP/module3.md at master</TabTitle>
              <Cross size={10} color="#4b4d51" width={1.8} />
            </Tab>
            <TabTail>
              <svg width="14" height="14"><path d="M7 .5v13M.5 7h13" stroke="#4b4d51" strokeWidth="1.800" /></svg>
              <svg width="16" height="16"><circle cx="8" cy="8" r="7.800" fill="#55585d" /><path d="M4.500 6h7L8 11z" fill="#fff" /></svg>
            </TabTail>
          </TabStrip>
          <Page>
            <Article>
              <ArticleHead>3.2.2 Model Algorithms (workflow)</ArticleHead>
              <Steps>
                <li><Link>Zonal Statistics</Link> calculates the <b><i>mean</i></b> within individual IDUs for <b>8</b> raster datasets.</li>
                <li><Link>Reclassify Field</Link> transforms to the values derived from each raster dataset to the <b>common suitability scale,</b> i.e., 1 to 9.</li>
                <li><Link>Weight Sum of Fields</Link> is used to combine and quantify the effects on suitability by different soil attributes, i.e., depth, pH, and<br />permeability.</li>
              </Steps>
            </Article>
            <PageScroll />
          </Page>
        </Browser>

        <Modeler $x={13} $y={44} $w={1523} $h={686}>
          <TitleBar>
            <QLogo />
            <TitleText>Processing Modeler</TitleText>
            <Controls>
              <svg width="11" height="11"><path d="M0 5.500h11" stroke="#9a9a9c" /></svg>
              <svg width="11" height="11"><rect x=".6" y=".6" width="9.800" height="9.800" fill="none" stroke="#8c8c8e" strokeWidth="1.200" /></svg>
              <Cross size={11} color="#9a9a9c" />
            </Controls>
          </TitleBar>
          <Toolbar>
            <svg width="14" height="24"><path d="M1.500 2v20M4.500 2v20" stroke="#c4c3c5" strokeWidth="1.200" strokeDasharray="1.500 2" /></svg>
            {tools.map((t, k) => (
              <React.Fragment key={k}>
                <Tool $gap={t.gap}>{t.art}</Tool>
                {t.rule && <Rule $before={t.rule[0]} $after={t.rule[1]} />}
              </React.Fragment>
            ))}
          </Toolbar>
          <Body>
            <Side>
              <PanelHead $top={2}><span>Variables</span><DockMark /></PanelHead>
              <VarTable>
                <VarHead><span>Variable</span><span>Value</span></VarHead>
                <VarRow><svg width="11" height="8"><path d="M0 0h11L5.500 8z" fill="#5c5c5e" /></svg>Model Vari...</VarRow>
              </VarTable>
              <VarButtons>
                <IconButton><svg width="16" height="16" viewBox="0 0 16 16"><path d="M5.500 1h5v4.500H15v5h-4.500V15h-5v-4.500H1v-5h4.500z" fill="#b9d6bf" stroke="#5c8f68" strokeWidth="1.300" /><path d="M8 3.500v9M3.500 8h9" stroke="#3f7a50" strokeWidth="1.800" /></svg></IconButton>
                <IconButton $off><svg width="16" height="8"><rect x=".5" y=".5" width="15" height="6" fill="#ececee" stroke="#d0d0d2" /><path d="M3 3.500h10" stroke="#d0d0d2" /></svg></IconButton>
              </VarButtons>
              <Grip $top={5} />
              <PanelHead $top={4}><span>Model Properties</span><DockMark /></PanelHead>
              <Field $top={10}><FieldName>Name</FieldName><Input $w={238}>Soil Conditions</Input></Field>
              <Field $top={6}><FieldName>Group</FieldName><Input $w={238} $hint>Enter group name here</Input></Field>
              <Grip $top={12} />
              <PanelHead $top={4}><span>Algorithms</span><DockMark /></PanelHead>
              <Search>
                <svg width="14" height="14" viewBox="0 0 14 14" fill="none" stroke="#8a8a8c" strokeWidth="1.300"><circle cx="5.600" cy="5.600" r="4.600" /><path d="M9 9l4 4" /></svg>
                Search...
              </Search>
              <AlgoBox>
                <AlgoList>
                  {algos.map((a, k) => (
                    <Algo key={a} $bg={k === 8 ? '#f1f0f2' : k % 2 ? '#fff' : '#e8e4e3'}>
                      <Gear size={16} color={k === 8 ? '#3f86cc' : '#7099cd'} />{a}
                    </Algo>
                  ))}
                </AlgoList>
                <VScroll>
                  <Piece $h={15} $bg="#fbfafc"><Arrow dir="up" /></Piece>
                  <Piece $h={131} $bg="#e3e2e4" $line />
                  <Piece $bg="#f8f7f9" />
                  <Piece $h={15} $bg="#fbfafc" $line><Arrow dir="down" /></Piece>
                </VScroll>
              </AlgoBox>
              <Tabs><SideTab $w={60}>Inputs</SideTab><SideTab $w={80} $on>Algorithms</SideTab></Tabs>
            </Side>
            <CanvasFrame>
              <Canvas><Diagram /></Canvas>
              <VScroll>
                <Piece $h={15} $bg="#fbfafc"><Arrow dir="up" /></Piece>
                <Piece $h={30} $bg="#e3e2e4" $line />
                <Piece $h={107} $bg="#f8f7f9" />
                <Piece $bg="#e3e2e4" $line />
                <Piece $h={16} $bg="#fbfafc"><Arrow dir="down" /></Piece>
              </VScroll>
              <HScroll>
                <Piece $w={18} $bg="#fbfafc"><Arrow dir="left" /></Piece>
                <Piece $w={475} $bg="#f8f7f9" $line />
                <Piece $bg="#e4e1e4" />
                <Piece $w={18} $bg="#fbfafc" $line><Arrow dir="right" /></Piece>
              </HScroll>
            </CanvasFrame>
          </Body>
        </Modeler>
        <Dock>
          {dockIcons.map(i => (
            <React.Fragment key={i.key}>
              <DockSlot>{i.art}{i.dot && <DockDot />}</DockSlot>
              {i.rule && <DockRule />}
            </React.Fragment>
          ))}
        </Dock>
      </Desktop>
      <Strip $h={9} />

      <Dialog $x={674} $y={339} $w={221} $h={308}>
        <DialogTitle><QLogo /><TitleText>Weights for RZD, Draina...</TitleText><Cross size={12} color="#3c3c3e" /></DialogTitle>
        <DialogBody>
          <Line $h={20}>Description</Line>
          <Line $h={31}><DialogInput $w={175}>nage<Between />pths)</DialogInput></Line>
          <Line $h={23}>Data type</Line>
          <Line $h={76} />
          <Line $h={27}><Check><svg width="11" height="11"><path d="M2 5l3 4 4-7" fill="none" stroke="#222" strokeWidth="2.500" /></svg></Check>Mandatory</Line>
          <Line $h={26}><Check />Advanced</Line>
          <Buttons><Button $main>OK</Button><Button>Cancel</Button></Buttons>
        </DialogBody>
      </Dialog>
      <Pointer width="14" height="22" viewBox="0 0 14 22"><path d="M1 1v16.500l4-3.700 2.700 6.300 2.800-1.200L7.800 12.800H13z" fill="#fff" stroke="#3a3a3c" strokeWidth="1.200" /></Pointer>
      <Shade />
      <Caption>Module 3 Tutorial - Soil Condition Model</Caption>
      <Play aria-label="Play">
        <svg width="200" height="200"><path d="M60 40v120l110-60z" fill="#fff" /></svg>
      </Play>
    </Stage>
  );
}
